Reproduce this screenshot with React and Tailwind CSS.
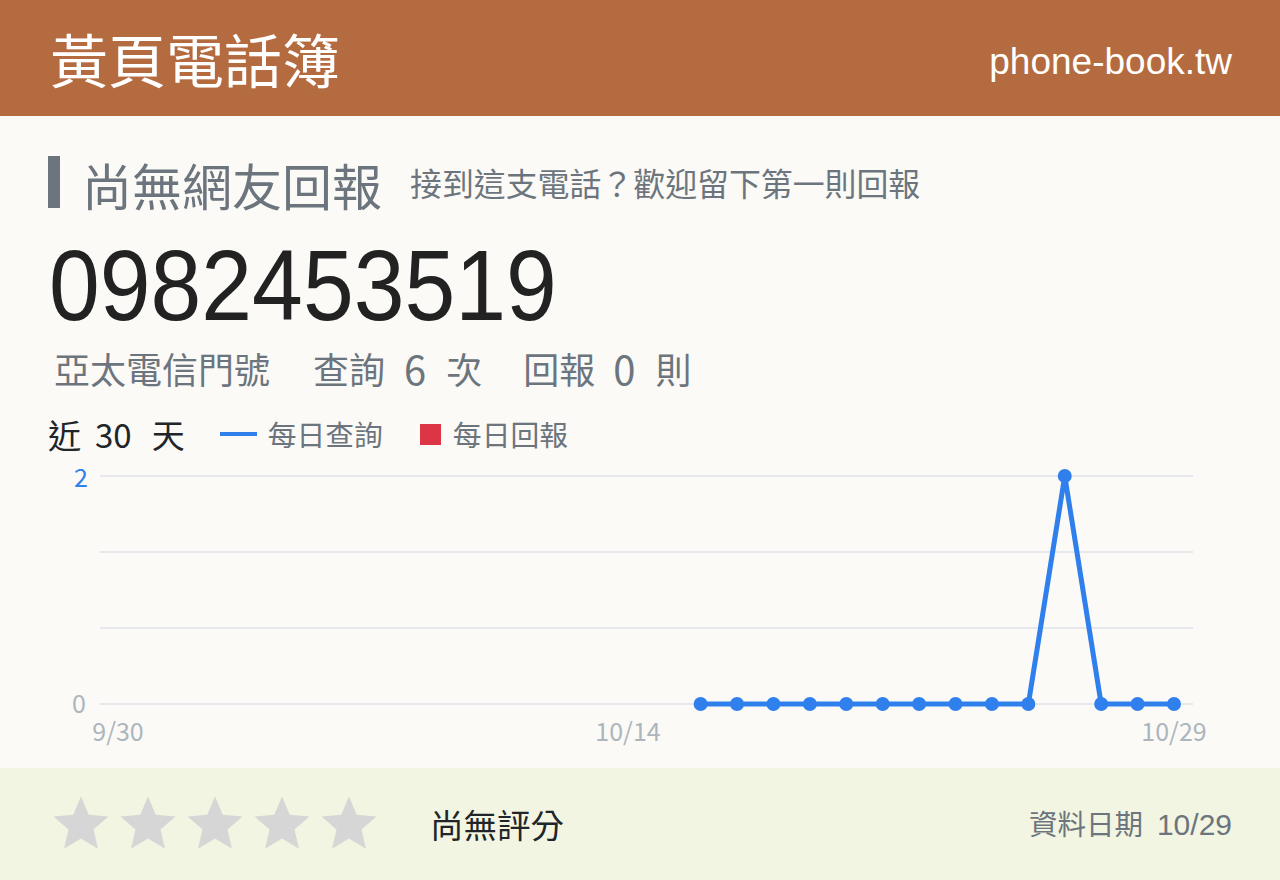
import React from 'react';

const CJK = { fontFamily: '"Noto Sans CJK TC", "Noto Sans", sans-serif' };
const ARIAL = { fontFamily: '"Liberation Sans", Arial, sans-serif' };

// daily lookups, 9/30 .. 10/29; null = no data yet
const queries = Array.from({ length: 30 }, (_, i) => (i < 16 ? null : i === 26 ? 2 : 0));

const X0 = 70;
const STEP = 36.414;
const BASE = 254;
const yFor = v => BASE - (v / 2) * 228;

const Star = () => (
  <svg width="66" height="66" viewBox="0 0 24 24" className="shrink-0">
    <path fill="#d6d6d6" d="M12 17.27L18.18 21l-1.64-7.03L22 9.24l-7.19-.61L12 2 9.19 8.63 2 9.24l5.46 4.73L5.82 21z" />
  </svg>
);

const Chart = () => {
  const pts = queries
    .map((v, i) => (v === null ? null : [X0 + i * STEP, yFor(v)]))
    .filter(Boolean);
  return (
    <svg width="1184" height="304" className="block" style={CJK}>
      {[0, 1, 2, 3].map(k => (
        <line key={k} x1="52" x2="1145" y1={26 + k * 76} y2={26 + k * 76} stroke="#e6e8ec" strokeWidth="2" />
      ))}
      <text x="40" y="37" textAnchor="end" fontSize="25" fill="#2f80ed">2</text>
      <text x="38" y="263" textAnchor="end" fontSize="25" fill="#adb5bd">0</text>
      <text x="70" y="291" textAnchor="middle" fontSize="25" fill="#adb5bd">9/30</text>
      <text x="580" y="291" textAnchor="middle" fontSize="25" fill="#adb5bd">10/14</text>
      <text x="1126" y="291" textAnchor="middle" fontSize="25" fill="#adb5bd">10/29</text>
      <polyline
        points={pts.map(p => p.join(',')).join(' ')}
        fill="none"
        stroke="#2f80ed"
        strokeWidth="5"
        strokeLinejoin="round"
      />
      {pts.map(([x, y]) => (
        <circle key={x} cx={x} cy={y} r="7" fill="#2f80ed" />
      ))}
    </svg>
  );
};

export default function App() {
  return (
    <div className="w-[1280px] h-[880px] flex flex-col bg-[#fbfaf6]" style={CJK}>
      <header className="h-[116px] shrink-0 bg-[#b56b40] pl-[50px] pr-[48px] flex items-center justify-between text-white">
        <div className="text-[58px] leading-none">黃頁電話簿</div>
        <div className="text-[37px] leading-none mt-[6px]" style={ARIAL}>
          phone-book.tw
        </div>
      </header>

      <main className="flex-1 px-12 pt-[40px]">
        <div className="flex items-center h-[52px]">
          <div className="w-3 h-[52px] bg-[#6c757d]" />
          <h1 className="ml-[22px] text-[50px] leading-none text-[#6c757d] mt-[3px]">尚無網友回報</h1>
          <span className="ml-[28px] text-[31.9px] leading-none text-[#6c757d] mt-[2px]">接到這支電話？歡迎留下第一則回報</span>
        </div>

        <div className="mt-[27px] h-[100px] ml-[1px] text-[100px] leading-none text-[#222] origin-left scale-x-[0.913]" style={ARIAL}>
          0982453519
        </div>

        <div className="mt-[9px] flex items-center h-[48px] text-[36px] leading-none text-[#6c757d] pl-[6px]">
          <span>亞太電信門號</span>
          <span className="ml-[43px]">查詢</span>
          <span className="ml-[19px] text-[40px]">6</span>
          <span className="ml-[20px]">次</span>
          <span className="ml-[41px]">回報</span>
          <span className="ml-[18px] text-[40px]">0</span>
          <span className="ml-[20px]">則</span>
        </div>

        <div className="mt-[26px] flex items-center h-[32px]">
          <span className="text-[33px] leading-none text-[#212529]">近</span>
          <span className="ml-[14px] text-[33px] leading-none text-[#212529]">30</span>
          <span className="ml-[20px] text-[33px] leading-none text-[#212529]">天</span>
          <span className="ml-[35px] w-[37px] h-[4px] bg-[#2f80ed]" />
          <span className="ml-[11px] text-[28.8px] leading-none text-[#6c757d]">每日查詢</span>
          <span className="ml-[37px] w-[21px] h-[21px] bg-[#dc3545]" />
          <span className="ml-[12px] text-[28.8px] leading-none text-[#6c757d]">每日回報</span>
        </div>

        <Chart />
      </main>

      <footer className="h-[112px] shrink-0 bg-[#f2f5e2] px-12 flex items-center justify-between">
        <div className="flex items-center">
          <div className="flex items-center gap-[1px]">
            <Star /><Star /><Star /><Star /><Star />
          </div>
          <span className="ml-[48px] text-[33.5px] leading-none text-[#212529]">尚無評分</span>
        </div>
        <div className="flex items-baseline text-[#6c757d]">
          <span className="text-[28.5px] leading-none">資料日期</span>
          <span className="ml-[14px] text-[30px] leading-none" style={ARIAL}>10/29</span>
        </div>
      </footer>
    </div>
  );
}
